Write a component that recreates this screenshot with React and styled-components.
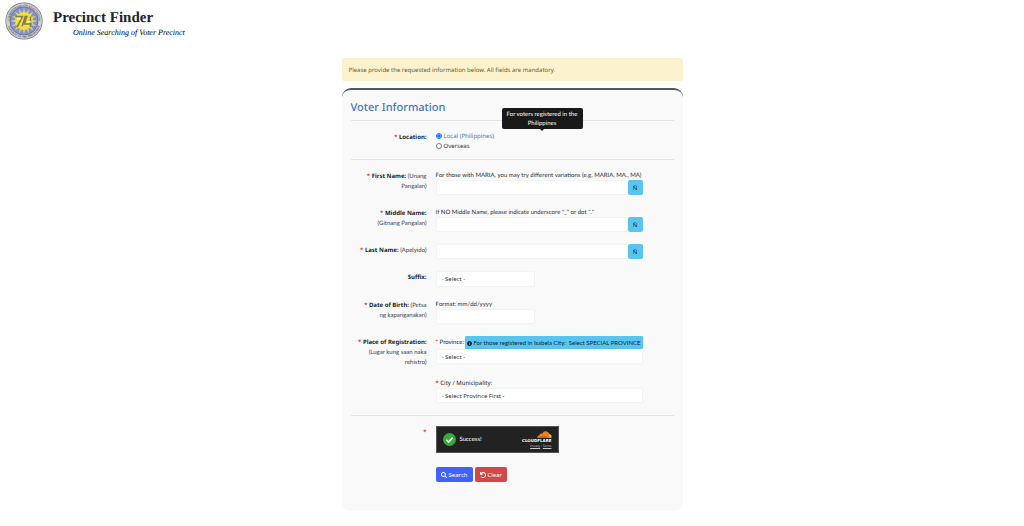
import React, { useState } from 'react';
import styled, { createGlobalStyle } from 'styled-components';
import { FaInfoCircle, FaSearch, FaUndo } from 'react-icons/fa';

const NARROW = "Lato, 'Noto Sans', sans-serif";

const GlobalStyle = createGlobalStyle`
  * {
    box-sizing: border-box;
  }
  body {
    margin: 0;
    background: #fff;
    color: #212529;
    font-family: 'Noto Sans', 'Open Sans', sans-serif;
    font-size: 6px;
    line-height: 10px;
    text-rendering: geometricPrecision;
  }
  button, input, select {
    font: inherit;
    color: inherit;
    margin: 0;
  }
`;

const RAYS = Array.from({ length: 16 }, (_, i) => i * 22.5);

const Seal = () => (
  <SealIcon viewBox="0 0 100 100" role="img" aria-label="Seal">
    <defs>
      <path id="sealTop" d="M12 50a38 38 0 0 1 76 0" />
      <path id="sealBottom" d="M6 50a44 44 0 0 0 88 0" />
    </defs>
    <circle cx="50" cy="50" r="49" fill="#77777c" />
    <circle cx="50" cy="50" r="47" fill="#cfcfd4" />
    <circle cx="50" cy="50" r="37" fill="#7d93e0" stroke="#65656e" strokeWidth="2" />
    {RAYS.map((angle) => (
      <path key={angle} d="M46 30L50 15l4 15z" fill="#e4cc50" transform={`rotate(${angle} 50 50)`} />
    ))}
    <circle cx="50" cy="50" r="23" fill="#f2dc3e" />
    <path d="M28 38h18L32 66M54 36L45 64M58 36L51 58h20M67 38v28" fill="none" stroke="#83804a" strokeWidth="4" />
    <path d="M32 44h9M58 52h10" stroke="#fff8c0" strokeWidth="4" />
    <text fontSize="8" fontWeight="700" fill="#50505a">
      <textPath href="#sealTop" startOffset="50%" textAnchor="middle">COMMISSION ON ELECTIONS</textPath>
    </text>
    <text fontSize="7" fontWeight="700" fill="#50505a">
      <textPath href="#sealBottom" startOffset="50%" textAnchor="middle">REPUBLIC OF THE PHILIPPINES</textPath>
    </text>
  </SealIcon>
);

const NameField = ({ id, label, note, hint }) => {
  const [value, setValue] = useState('');

  return (
    <Row>
      <Label htmlFor={id}>
        <Star>*</Star> <b>{label}</b> <Note>{note}</Note>
      </Label>
      <div>
        {hint && <Hint>{hint}</Hint>}
        <InputGroup>
          <Input id={id} value={value} onChange={(e) => setValue(e.target.value)} />
          <EnyeButton type="button" onClick={() => setValue(value + 'Ñ')}>Ñ</EnyeButton>
        </InputGroup>
      </div>
    </Row>
  );
};

export default function App() {
  const [location, setLocation] = useState('local');

  return (
    <>
      <GlobalStyle />
      <Header>
        <Seal />
        <div>
          <Title>Precinct Finder</Title>
          <Subtitle>Online Searching of Voter Precinct</Subtitle>
        </div>
      </Header>
      <Main>
        <Alert>Please provide the requested information below. All fields are mandatory.</Alert>
        <Card onSubmit={(e) => e.preventDefault()}>
          <Heading>Voter Information</Heading>
          <Section>
            <Row role="radiogroup" aria-labelledby="location">
              <Label as="div" id="location">
                <Star>*</Star> <b>Location:</b>
              </Label>
              <Options>
                <Option $active={location === 'local'}>
                  <Radio name="location" checked={location === 'local'} onChange={() => setLocation('local')} />
                  Local (Philippines)
                </Option>
                <Option $active={location === 'overseas'}>
                  <Radio name="location" checked={location === 'overseas'} onChange={() => setLocation('overseas')} />
                  Overseas
                </Option>
                <Tooltip role="tooltip">For voters registered in the Philippines</Tooltip>
              </Options>
            </Row>
          </Section>
          <Section $roomy>
            <NameField
              id="firstName"
              label="First Name:"
              note="(Unang Pangalan)"
              hint="For those with MARIA, you may try different variations (e.g. MARIA, MA., MA)"
            />
            <NameField
              id="middleName"
              label="Middle Name:"
              note="(Gitnang Pangalan)"
              hint={'If NO Middle Name, please indicate underscore "_" or dot "."'}
            />
            <NameField id="lastName" label="Last Name:" note="(Apelyido)" />
            <Row>
              <Label htmlFor="suffix"><b>Suffix:</b></Label>
              <Select id="suffix" $short>
                <option>- Select -</option>
              </Select>
            </Row>
            <Row>
              <Label htmlFor="birthDate">
                <Star>*</Star> <b>Date of Birth:</b> <Note>(Petsa ng kapanganakan)</Note>
              </Label>
              <div>
                <Hint>Format: mm/dd/yyyy</Hint>
                <Input id="birthDate" $short />
              </div>
            </Row>
            <Row>
              <Label as="div">
                <Star>*</Star> <b>Place of Registration:</b> <Note>(Lugar kung saan naka rehistro)</Note>
              </Label>
              <Place>
                <div>
                  <ProvinceLine>
                    <label htmlFor="province"><Star>*</Star> Province:</label>
                    <Special type="button">
                      <span><FaInfoCircle /> For those registered in Isabela City:</span>
                      <span>Select SPECIAL PROVINCE</span>
                    </Special>
                  </ProvinceLine>
                  <Select id="province">
                    <option>- Select -</option>
                  </Select>
                </div>
                <div>
                  <CityLabel htmlFor="city"><Star>*</Star> City / Municipality:</CityLabel>
                  <Select id="city">
                    <option>- Select Province First -</option>
                  </Select>
                </div>
              </Place>
            </Row>
          </Section>
          <Section>
            <Row>
              <Label as="div"><Star>*</Star></Label>
              <div>
                <Captcha>
                  <CheckIcon viewBox="0 0 24 24">
                    <circle cx="12" cy="12" r="12" fill="#38a838" />
                    <path d="M6 12.5l4.3 4.2L18 8.5" fill="none" stroke="#fff" strokeWidth="3" />
                  </CheckIcon>
                  <Success>Success!</Success>
                  <Brand>
                    <Cloud viewBox="0 0 60 28">
                      <path d="M1 27c0-6 4-10 9-10 0-6 6-9 11-6C25 2 33-1 41 3c7 3 9 9 7 15l-3 9z" fill="#f38020" />
                      <path d="M47 12c7-1 12 5 12 15H44c2-4 3-9 3-15z" fill="#faae40" />
                      <path d="M12 22h28l4-3" fill="none" stroke="#a85a1c" strokeWidth="2" />
                    </Cloud>
                    <BrandName>CLOUDFLARE</BrandName>
                    <BrandLinks>
                      <a href="#privacy">Privacy</a> • <a href="#terms">Terms</a>
                    </BrandLinks>
                  </Brand>
                </Captcha>
                <Actions>
                  <Button type="submit" $color="#4263fb"><FaSearch /> Search</Button>
                  <Button type="reset" $color="#d04848"><FaUndo /> Clear</Button>
                </Actions>
              </div>
            </Row>
          </Section>
        </Card>
      </Main>
    </>
  );
}

const Header = styled.header`
  display: flex;
  gap: 10px;
  padding: 2px 5px 0;
  height: 58px;
  font-family: 'Liberation Serif', serif;
`;

const SealIcon = styled.svg`
  width: 38px;
  height: 38px;
`;

const Title = styled.h1`
  margin: 0;
  padding-top: 7px;
  font-size: 15px;
  font-weight: 700;
  line-height: 18px;
`;

const Subtitle = styled.p`
  margin: 0;
  padding-left: 20px;
  color: #000;
  font-size: 8px;
  font-style: italic;
  line-height: 12px;
`;

const Main = styled.main`
  max-width: 341px;
  margin: 0 auto;
`;

const Alert = styled.div`
  margin-bottom: 7px;
  padding: 7px 7px 6px;
  border-radius: 2px;
  background: #fcf2cd;
  color: #665a2a;
`;

const Card = styled.form`
  padding: 10px 9px 21px;
  border-top: 2px solid #56595b;
  border-radius: 9px;
  background: #f9f9f9;
`;

const Heading = styled.h2`
  margin: 0 0 4px;
  color: #4676bb;
  font-size: 11px;
  font-weight: 500;
  line-height: 16px;
`;

const Section = styled.section`
  display: grid;
  gap: 12px;
  padding: 10px 0 ${({ $roomy }) => ($roomy ? '12px' : '8px')};
  border-top: 1px solid #e3e3e3;
`;

const Row = styled.div`
  display: grid;
  grid-template-columns: 76px minmax(0, 207px);
  gap: 9px;
`;

const Label = styled.label`
  padding: 1px 0 0 7px;
  text-align: right;
`;

const Star = styled.span`
  color: #f03a20;
  font-weight: 700;
`;

const Note = styled.span`
  color: #3c4043;
  font-family: ${NARROW};
  line-height: 8px;
`;

const Hint = styled.div`
  padding-top: 1px;
  white-space: nowrap;
  color: #2c3034;
  font-family: ${NARROW};
  font-kerning: none;
  line-height: 9px;
`;

const CityLabel = styled.label`
  display: block;
`;

const Options = styled.div`
  position: relative;
  display: flex;
  flex-direction: column;
  align-items: flex-start;
`;

const Option = styled.label`
  display: flex;
  align-items: center;
  gap: 2px;
  color: ${({ $active }) => ($active ? '#4676bb' : '#2c3034')};
`;

const Radio = styled.input.attrs({ type: 'radio' })`
  width: 6px;
  height: 6px;
`;

const Tooltip = styled.div`
  position: absolute;
  left: 66px;
  bottom: 22px;
  width: 81px;
  padding: 2px 4px 1px;
  border-radius: 2px;
  background: #191919;
  color: #fff;
  font-family: ${NARROW};
  line-height: 9px;
  text-align: center;

  &::after {
    content: '';
    position: absolute;
    top: 100%;
    left: 50%;
    margin-left: -2px;
    border: 2px solid transparent;
    border-top-color: #191919;
  }
`;

const InputGroup = styled.div`
  display: flex;
`;

const Input = styled.input`
  display: block;
  flex: 1;
  width: ${({ $short }) => ($short ? '99px' : '100%')};
  min-width: 0;
  height: 15px;
  padding: 0 5px;
  border: 1px solid #f2f3f4;
  border-radius: 2px;
  background: #fff;
`;

const EnyeButton = styled.button`
  width: 15px;
  height: 15px;
  padding: 0;
  border: 0;
  border-radius: 2px;
  background: #58c4f0;
`;

const Select = styled.select`
  appearance: none;
  display: block;
  width: ${({ $short }) => ($short ? '99px' : '100%')};
  height: ${({ $short }) => ($short ? '16px' : '15px')};
  padding: 0 5px;
  border: 1px solid #f2f3f4;
  border-radius: 2px;
  background: #fff;
  color: #2c3034;
`;

const Place = styled.div`
  display: grid;
  grid-template-columns: minmax(0, 1fr);
  gap: 14px;
`;

const ProvinceLine = styled.div`
  display: flex;
  align-items: center;
  justify-content: space-between;
  font-family: ${NARROW};
  white-space: nowrap;
`;

const Special = styled.button`
  display: flex;
  align-items: center;
  gap: 3px;
  height: 13px;
  padding: 0 2px;
  border: 0;
  border-radius: 1px;
  background: #58c4f0;
  color: #12242e;
  white-space: nowrap;

  svg {
    width: 5px;
    height: 5px;
    vertical-align: -1px;
  }
`;

const Captcha = styled.div`
  display: flex;
  align-items: center;
  width: 123px;
  height: 27px;
  padding: 0 6px;
  border: 1px solid #555;
  background: #222;
  color: #fff;
`;

const CheckIcon = styled.svg`
  width: 13px;
  height: 13px;
`;

const Success = styled.span`
  margin-left: 4px;
  font-family: ${NARROW};
`;

const Brand = styled.div`
  display: flex;
  flex-direction: column;
  align-items: flex-end;
  margin-left: auto;
`;

const Cloud = styled.svg`
  width: 15px;
  height: 7px;
`;

const BrandName = styled.span`
  font-family: 'DejaVu Sans', sans-serif;
  font-size: 4px;
  font-weight: 700;
  line-height: 6px;
`;

const BrandLinks = styled.span`
  color: #ccc;
  font-size: 3px;
  line-height: 5px;

  a {
    color: inherit;
  }
`;

const Actions = styled.div`
  display: flex;
  gap: 2px;
  margin-top: 14px;
`;

const Button = styled.button`
  display: flex;
  align-items: center;
  gap: 2px;
  height: 15px;
  padding: 0 5px;
  border: 0;
  border-radius: 2px;
  background: ${({ $color }) => $color};
  color: #fff;
`;
